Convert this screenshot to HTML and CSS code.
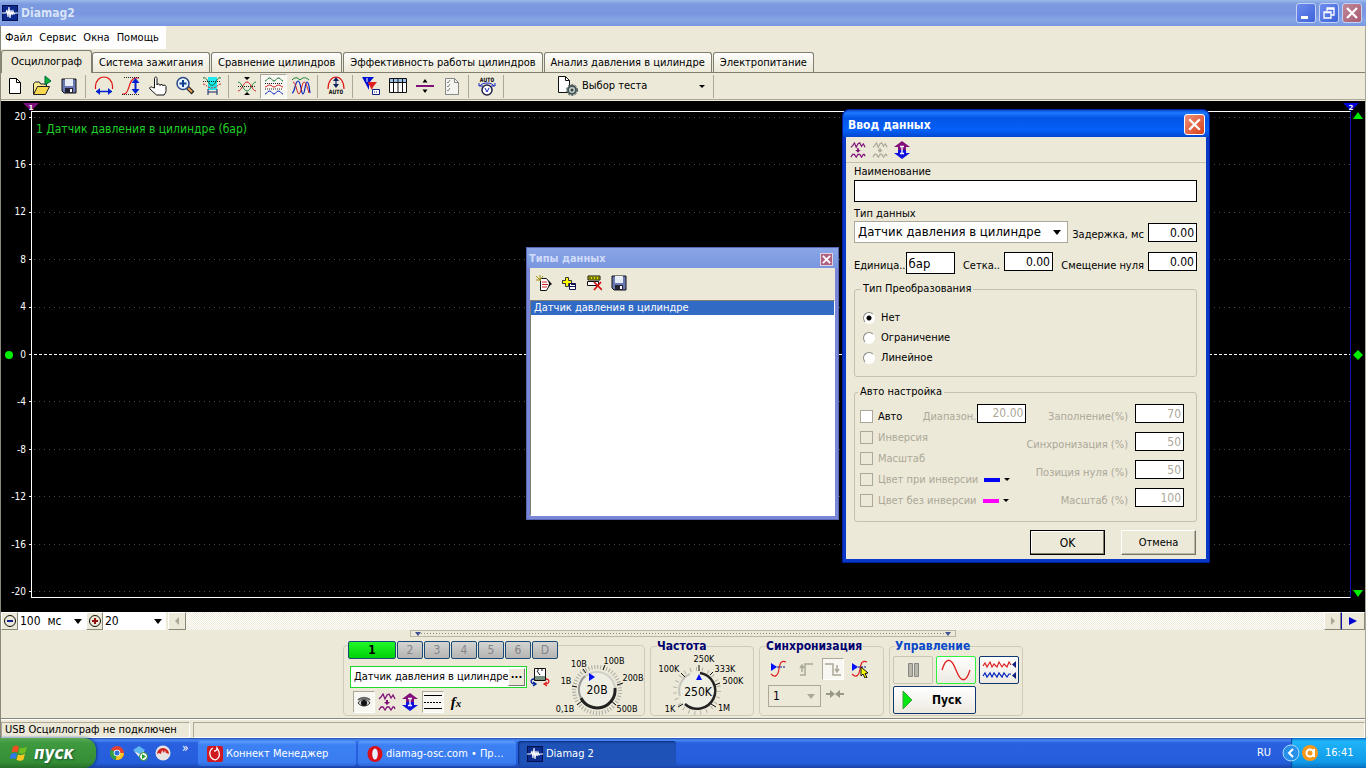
FILE: index.html
```
<!DOCTYPE html>
<html lang="ru">
<head>
<meta charset="utf-8">
<title>Diamag2</title>
<link rel="stylesheet" href="styles.css">
</head>
<body>
<svg class="defs" width="0" height="0" aria-hidden="true">
  <defs>
    <symbol id="app" viewBox="0 0 16 16"><rect width="16" height="16" fill="#0a2a8c"/><rect x=".5" y=".5" width="15" height="15" fill="none" stroke="#001050"/><path d="M0 8h4l1-3 1 7 1-10 1 11 1-8 1 5 1-4 1 3 1-1h3" fill="none" stroke="#fff" stroke-width="1.1"/></symbol>
    <symbol id="wave-move" viewBox="0 0 18 18"><path d="M1 6l2-2 2-3 2 5 2-4 2-1 2 4 2-3 2 4M1 17l2-3h2l2 3 2-3h2l2 3 2-3h1l1 2" fill="none" stroke="currentColor" stroke-width="1.300"/><path d="M6 9h6l-3 3zM8 7h2v3H8z" fill="currentColor"/></symbol>
    <symbol id="updown" viewBox="0 0 16 18"><path d="M8 0l8 6h-4v3H4V6H0z" fill="#80107a"/><path d="M8 18l8-6h-4V9H4v3H0z" fill="#1010e0"/><path d="M6 5.500h4M8 5v8M6 12.500h4" stroke="#fff" stroke-width="1.300" fill="none"/></symbol>
    <symbol id="save" viewBox="0 0 16 16"><path d="M1 1h14v14H3l-2-2z" fill="#6a78b4" stroke="#111"/><path d="M4 1h8v7H4z" fill="#e8ecf4"/><path d="M4 10h8v5H4z" fill="#223"/><path d="M9 11h2v3H9z" fill="#fff"/></symbol>
    <symbol id="sync" viewBox="0 0 18 18"><path d="M1 14c4 4 7 2 8-5s3-9 7-7" fill="none" stroke="#e02020" stroke-width="1.2"/><path d="M1 7h15" stroke="#001090" stroke-dasharray="2 1"/><path d="M1 3l6 4-6 4z" fill="#0010ff"/></symbol>
  </defs>
</svg>

<header class="titlebar">
  <svg class="i16"><use href="#app"/></svg>
  <h1>Diamag2</h1>
  <div class="winbtns">
    <button class="wb" aria-label="Свернуть"><svg class="i18" viewBox="0 0 18 18"><path d="M4 12h7v3H4z" fill="#fff"/></svg></button>
    <button class="wb" aria-label="Восстановить"><svg class="i18" viewBox="0 0 18 18"><path d="M7 7V4h7v7h-3M6.500 5h8M4 8h7v6H4zM4 8.500h7" fill="none" stroke="#fff" stroke-width="1.300"/></svg></button>
    <button class="wb dim" aria-label="Закрыть"><svg class="i18" viewBox="0 0 18 18"><path d="M4 4l10 10M14 4L4 14" stroke="#fff" stroke-width="2.200"/></svg></button>
  </div>
</header>

<main class="app">
<nav class="menubar"><button>Файл</button><button>Сервис</button><button>Окна</button><button>Помощь</button></nav>

<div class="tabs" role="tablist">
  <button class="tab on" role="tab">Осциллограф</button><button class="tab" role="tab">Система зажигания</button><button class="tab" role="tab">Сравнение цилиндров</button><button class="tab" role="tab">Эффективность работы цилиндров</button><button class="tab" role="tab">Анализ давления в цилиндре</button><button class="tab" role="tab">Электропитание</button>
</div>

<div class="toolbar">
  <button class="tool" aria-label="Новый"><svg viewBox="0 0 20 20"><path d="M4.500 2.500h7l4 4v11h-11z" fill="#fff" stroke="#000"/><path d="M11.500 2.500v4h4" fill="none" stroke="#000"/></svg></button>
  <button class="tool" aria-label="Открыть"><svg viewBox="0 0 20 20"><path d="M1.500 18V7.500l2-1.500h4l1 2h6v3" fill="#f8e890" stroke="#222"/><path d="M1.500 18.500l4-8h12l-4 8z" fill="#f8d850" stroke="#222"/><path d="M13 0l6 5-6 4z" fill="#08b030" stroke="#064"/></svg></button>
  <button class="tool" aria-label="Сохранить"><svg viewBox="-2 -2 20 20"><use href="#save" width="16" height="16"/></svg></button>
  <span class="sep"></span>
  <button class="tool" aria-label="Период"><svg viewBox="0 0 20 20"><path d="M1.500 13V10c1-12 16-12 17 0v3" fill="none" stroke="#e01010" stroke-width="1.200"/><path d="M2 15.500h16" stroke="#0020d0" stroke-width="1.500"/><path d="M2 15.500l4-3.500v7zM18 15.500l-4-3.500v7z" fill="#0020d0"/></svg></button>
  <button class="tool" aria-label="Амплитуда"><svg viewBox="0 0 20 20"><path d="M1 18h2c6 0 4-16 12-16h3" fill="none" stroke="#e01010" stroke-width="1.200"/><path d="M3 1.500h15M1 18.500h18" stroke="#222" stroke-dasharray="1 1"/><path d="M14.500 4v12" stroke="#0020d0" stroke-width="2"/><path d="M14.500 2l4 5h-8zM14.500 18l4-5h-8z" fill="#0020d0"/></svg></button>
  <button class="tool" aria-label="Рука"><svg viewBox="0 0 20 20"><path d="M6.500 12V2.500c0-2 2.500-2 2.500 0V9c0-1.500 3-1.500 3 .5 0-1.500 3-1.500 3 .5 0-1.500 3-1 3 .5v4c0 2-1 3-2 4.500H8.500L2 13c-1-1.500 1-3 2.500-1.500z" fill="#fff" stroke="#111"/></svg></button>
  <button class="tool" aria-label="Масштаб"><svg viewBox="0 0 20 20"><path d="M12 11l6 6" stroke="#222" stroke-width="4"/><path d="M13 12l4 4" stroke="#e8a050" stroke-width="2"/><circle cx="8" cy="7.500" r="6" fill="#e8f4ff" stroke="#2a4a88" stroke-width="1.500"/><path d="M8 4v7M4.500 7.500h7" stroke="#104090" stroke-width="2"/></svg></button>
  <button class="tool" aria-label="Курсоры"><svg viewBox="0 0 20 20"><path d="M6 1h9v13H6z" fill="#20e8f0"/><path d="M1 2c3-1 4 2 6 5 1 3 5 3 6 0 2-3 3-6 6-5" fill="none" stroke="#107030"/><path d="M1 5.500h18" stroke="#222" stroke-dasharray="1 1"/><path d="M1 8c3 0 4 4 9 4s6-4 9-4" fill="none" stroke="#c03030" stroke-dasharray="2 1"/><path d="M6 13v6M15 13v6M6 16h9" stroke="#102060"/></svg></button>
  <span class="sep"></span>
  <button class="tool" aria-label="Наложить"><svg viewBox="0 0 20 20"><path d="M1 6c4 0 5 9 9 9s5-9 9-9" fill="none" stroke="#108030"/><path d="M1 15c4 0 5-9 9-9s5 9 9 9" fill="none" stroke="#d02020"/><path d="M1 10.500h18" stroke="#222" stroke-dasharray="1 1"/><path d="M7 1h6l-3 3zM7 19h6l-3-3z"/></svg></button>
  <button class="tool pressed" aria-label="Разделить"><svg viewBox="0 0 20 20"><g fill="none"><path d="M1 5c2 0 2-3 4.500-3S8 5 10 5s2-3 4.500-3S17 5 19 5" stroke="#107030"/><path d="M1 11c2 0 2-2 4.500-2S8 11 10 11s2-2 4.500-2S17 11 19 11" stroke="#d02020"/><path d="M1 18c2 0 2-3 4.500-3S8 18 10 18s2-3 4.500-3S17 18 19 18" stroke="#0020c0"/><path d="M1 7.500h18M1 13h18" stroke="#222" stroke-dasharray="1 1"/></g></svg></button>
  <button class="tool" aria-label="Каналы"><svg viewBox="0 0 20 20"><g fill="none"><path d="M1 4c3-3 5-3 8 0 3-3 6-3 9 0" stroke="#108030"/><path d="M1 17c3 0 3-12 6-12s3 13 5 13 2-12 4-12 2 5 3 11" stroke="#0020c0" stroke-width="1.200"/><path d="M2 6c3 0 4 12 6 12s3-12 5-12 3 5 5 11" stroke="#d02020"/></g></svg></button>
  <span class="sep"></span>
  <button class="tool" aria-label="Автомасштаб"><svg viewBox="0 0 20 20"><path d="M2 13C2-3 18-3 18 13" fill="none" stroke="#e01010" stroke-width="1.200"/><path d="M10 3v8" stroke="#102060" stroke-width="1.200"/><path d="M10 1l3 4H7zM10 12l3-4H7z" fill="#102060"/><text x="10" y="18" class="tiny">AUTO</text></svg></button>
  <span class="sep"></span>
  <button class="tool" aria-label="Маркеры"><svg viewBox="0 0 20 20"><path d="M1 1h12L8 7v7L1 1z" fill="#0010d0"/><path d="M8 6h8l-4 5-1 3-4-7z" fill="#e02020"/><path d="M6 2v4" stroke="#fff"/><path d="M11.500 13.500h7v5h-7z" fill="#fff" stroke="#102080"/><path d="M13 16h4" stroke="#102080" stroke-dasharray="1 1"/></svg></button>
  <button class="tool" aria-label="Таблица"><svg viewBox="0 0 20 20"><path d="M1.500 2.500h17v14h-17z" fill="#fff" stroke="#111"/><path d="M2 3h16v3H2z" fill="#9ac0e8"/><path d="M1 6.500h18M5.500 3v13M10 3v13M14.500 3v13" stroke="#111"/></svg></button>
  <button class="tool" aria-label="Линия"><svg viewBox="0 0 20 20"><path d="M1 10h18" stroke="#80107a" stroke-width="2"/><path d="M7.500 6.500L10 3l2.500 3.500zM7.500 13.500L10 17l2.500-3.500z"/></svg></button>
  <button class="tool" aria-label="Список"><svg viewBox="0 0 20 20"><path d="M3.500 2.500h9l4 4v12h-13z" fill="#f4f4f0" stroke="#888"/><path d="M5 6l1 1 2-3M5 10l1 1 2-3M5 14l1 1 2-3M12.500 2.500v4h4" fill="none" stroke="#888"/></svg></button>
  <span class="sep"></span>
  <button class="tool" aria-label="Авто"><svg viewBox="0 0 20 20"><text x="10" y="6" class="tiny">AUTO</text><circle cx="10" cy="14" r="5" fill="#fff" stroke="#224" stroke-width="1.500"/><path d="M8 12l2 4 2-4M3 10c2-4 12-4 14 0M2 7v3h4M18 7v3h-4" fill="none" stroke="#1020c0"/></svg></button>
  <span class="sep"></span>
  <button class="testpick"><svg class="i20" viewBox="0 0 20 20"><path d="M.5.500h7l4 4v12H.5z" fill="#fff" stroke="#111"/><path d="M7.500.500v4h4" fill="none" stroke="#111"/><circle cx="14" cy="14" r="4" fill="#c8d0cc" stroke="#455" stroke-width="2"/><circle cx="14" cy="14" r="5.500" fill="none" stroke="#455" stroke-dasharray="2 1.500"/><circle cx="14" cy="14" r="1.500" fill="#344"/></svg><span>Выбор теста</span><i class="arrow small"></i></button>
  <span class="sep"></span>
</div>

<section class="scope">
  <div class="yaxis"><span>20</span><span>16</span><span>12</span><span>8</span><span>4</span><span>0</span><span>-4</span><span>-8</span><span>-12</span><span>-16</span><span>-20</span></div>
  <div class="plot">
    <div class="grid"></div><div class="grid"></div><div class="grid"></div><div class="grid"></div><div class="grid"></div><div class="grid zero"></div><div class="grid"></div><div class="grid"></div><div class="grid"></div><div class="grid"></div><div class="grid"></div>
    <span class="trace">1 Датчик давления в цилиндре (бар)</span>
    <svg class="flag first" viewBox="0 0 16 8"><path d="M0 0h16L8 8z" fill="#801080"/><text x="8" y="7" class="num">1</text></svg>
    <svg class="flag second" viewBox="0 0 16 8"><path d="M0 0h16L8 8z" fill="#0000d8"/><text x="8" y="7" class="num">2</text></svg>
  </div>
  <div class="gutter">
    <svg class="i10" viewBox="0 0 10 10"><path d="M5 1l5 7H0z" fill="#0e0"/></svg>
    <svg class="i10" viewBox="0 0 10 10"><path d="M5 0l5 5-5 5-5-5z" fill="#0e0"/></svg>
    <svg class="i10" viewBox="0 0 10 10"><path d="M0 2h10L5 9z" fill="#0e0"/></svg>
  </div>
  <span class="ball"></span>
</section>

<div class="timebar">
  <button class="sq" aria-label="Уменьшить"><svg viewBox="0 0 14 14"><circle cx="7" cy="7" r="5.500" fill="none" stroke="#111"/><path d="M4 7h6" stroke="#102090" stroke-width="2"/></svg></button>
  <label class="pick"><select aria-label="Развертка"><option>100&nbsp; мс</option></select><i class="arrow"></i></label>
  <button class="sq" aria-label="Увеличить"><svg viewBox="0 0 14 14"><circle cx="7" cy="7" r="5.500" fill="none" stroke="#111"/><path d="M4 7h6M7 4v6" stroke="#901010" stroke-width="2"/></svg></button>
  <label class="pick narrow"><select aria-label="Масштаб"><option>20</option></select><i class="arrow"></i></label>
  <button class="sq left" aria-label="Назад"><svg viewBox="0 0 14 14"><path d="M9 3v8L5 7z" fill="#aaa898"/></svg></button>
  <div class="track"></div>
  <button class="sq" aria-label="Вперед"><svg viewBox="0 0 14 14"><path d="M5 3v8l4-4z" fill="#aaa898"/></svg></button>
  <button class="sq play" aria-label="В конец"><svg viewBox="0 0 14 14"><path d="M3 3v8l8-4z" fill="#0000d0"/></svg></button>
</div>

<div class="splitter"><i></i><b></b><i></i></div>

<section class="panel">
  <div class="group channel">
    <div class="chcol">
      <div class="chans"><button class="ch on">1</button><button class="ch">2</button><button class="ch">3</button><button class="ch">4</button><button class="ch">5</button><button class="ch">6</button><button class="ch">D</button></div>
      <div class="sensor"><div class="sensorbox"><input aria-label="Датчик" value="Датчик давления в цилиндре"><button aria-label="Выбрать">...</button></div>
        <svg class="i20" viewBox="0 0 20 20"><path d="M4.500 1.500h11v12h-11z" fill="#fff" stroke="#111"/><path d="M5 9h10v4H5z" fill="#789080"/><path d="M7 4l3 4M11 3h2M7 3h2" stroke="#111"/><path d="M4 12c-4 0-4 5 1 5M3 15l3 2-3 2" fill="none" stroke="#0020a0" stroke-width="1.300"/><path d="M16 12c4 0 4 5-1 5M17 15l-3 2 3 2" fill="none" stroke="#e02020" stroke-width="1.300"/></svg></div>
      <div class="chtools">
        <button class="t22 pressed" aria-label="Показать"><svg viewBox="0 0 18 18"><path d="M3 10c3-5 9-5 12 0-3 4-9 4-12 0z" fill="#ccc" stroke="#333"/><path d="M3 7c3-3 9-3 12 0" fill="none" stroke="#666" stroke-width="2"/><circle cx="9" cy="10" r="3" fill="#111"/></svg></button>
        <button class="t22 purple" aria-label="Сдвиг"><svg><use href="#wave-move"/></svg></button>
        <button class="t22" aria-label="Вертикаль"><svg><use href="#updown"/></svg></button>
        <button class="t22 pressed" aria-label="Линии"><svg viewBox="0 0 18 16"><path d="M0 1.500h18M0 14.500h18" stroke="#000"/><path d="M0 8.500h18" stroke="#000" stroke-dasharray="2 1"/></svg></button>
        <button class="t22 fx">f<small>x</small></button>
      </div>
    </div>
    <svg class="dial1" viewBox="0 0 92 64"><circle cx="39" cy="39" r="23" fill="none" stroke="#aaa9a0" stroke-width="4" stroke-dasharray="1 2"/><circle cx="39" cy="39" r="20" fill="#ece9d8"/><circle cx="39" cy="39" r="18" fill="#efeee4" stroke="#d0d0c8" stroke-width="2"/><path d="M57 37A18 18 0 0 1 23 47" fill="none" stroke="#222" stroke-width="3"/><path d="M27 25A18 18 0 0 0 23 47" fill="none" stroke="#999" stroke-width="2"/><path d="M31 22l6 4-6 4z" fill="#0010f0"/><path d="M14 35l5 1M25 18l3 4M47 14l-2 5M65 32l-6 2M58 54l-5-4M19 54l5-4" stroke="#111"/><g class="dtxt"><text x="39" y="43" class="mid">20В</text><text x="21" y="16">10В</text><text x="56" y="13">100В</text><text x="8" y="33">1В</text><text x="75" y="30">200В</text><text x="7" y="61">0,1В</text><text x="69" y="61">500В</text></g></svg>
  </div>
  <fieldset class="group freq"><legend>Частота</legend>
    <svg class="dial2" viewBox="0 0 96 66"><circle cx="42" cy="38" r="22" fill="none" stroke="#b4b3a8" stroke-width="4" stroke-dasharray="1 5"/><circle cx="42" cy="38" r="18" fill="#efeee2"/><path d="M45 20A18 18 0 1 1 30 51" fill="none" stroke="#222" stroke-width="2.500"/><path d="M25 43A18 18 0 0 1 35 21" fill="none" stroke="#c4c4bc" stroke-width="2"/><path d="M44 21l3 6h-6z" fill="#0010f0"/><path d="M44 12v6M26 20l4 4M58 19l-3 3M65 30l-5 2M23 54l5-3M61 54l-5-3" stroke="#111"/><g class="dtxt"><text x="43" y="43" class="mid">250K</text><text x="49" y="9">250K</text><text x="14" y="19">100K</text><text x="70" y="19">333K</text><text x="78" y="31">500K</text><text x="15" y="59">1K</text><text x="69" y="58">1M</text></g></svg>
  </fieldset>
  <fieldset class="group syncg"><legend>Синхронизация</legend>
    <div class="row syncrow">
      <button class="t22" aria-label="Синхронизация"><svg><use href="#sync"/></svg></button>
      <button class="t22" aria-label="Фронт"><svg viewBox="0 0 18 18"><path d="M3 15h5V4h8M5 12V6M3 8l2-3 2 3" fill="none" stroke="#aaa898" stroke-width="1.500"/></svg></button>
      <button class="t22 pressed" aria-label="Спад"><svg viewBox="0 0 18 18"><path d="M1 4h8v11h8M13 5v7M11 9l2 3 2-3" fill="none" stroke="#aaa898" stroke-width="1.500"/></svg></button>
      <button class="t22" aria-label="Ручная"><svg viewBox="0 0 18 18"><use href="#sync" width="18" height="18"/><path d="M10 7l7 6-3 .5 2 4-2 .5-2-4-2 2z" fill="#ff0" stroke="#111"/></svg></button>
    </div>
    <div class="row"><label class="syncsel"><select aria-label="Канал" disabled><option>1</option></select><i class="arrow gray"></i></label>
    <svg class="i18" viewBox="0 0 18 18"><path d="M0 8h4V5l5 4-5 4v-3H0zM18 8h-4V5L9 9l5 4v-3h4z" fill="#999888"/></svg></div>
  </fieldset>
  <fieldset class="group ctl"><legend>Управление</legend>
    <div class="row">
      <button class="wide-btn off" aria-label="Пауза"><svg class="i18" viewBox="0 0 18 18"><path d="M4.500 2.500h4v13h-4zM10.500 2.500h4v13h-4z" fill="#b8b6a8" stroke="#888"/></svg></button>
      <button class="wide-btn green" aria-label="Синус"><svg class="i30" viewBox="0 0 30 22"><path d="M1 11C5-2 10-2 15 11S25 24 29 11" fill="none" stroke="#e02020" stroke-width="1.300"/></svg></button>
      <button class="wide-btn" aria-label="Поток"><svg class="i34" viewBox="0 0 34 22"><path d="M1 7l2-3 2 4 3-5 2 5 2-3 3 3 2-5 3 5 2-3 3 3 2-5 2 3" fill="none" stroke="#e02020" stroke-width="1.200"/><path d="M1 17l2-3 2 4 3-4 2 4 2-4 3 4 2-4 3 4 2-4 3 4 2-3h2" fill="none" stroke="#0020c0" stroke-width="1.200"/><path d="M34 2v7l-4-3.500zM34 13v7l-4-3.500z" fill="#102080"/></svg></button>
    </div>
    <button class="start"><svg class="i20" viewBox="0 0 20 20"><path d="M4 1l9 9-9 9z" fill="#00e810" stroke="#40a040"/></svg><span>Пуск</span></button>
  </fieldset>
</section>

<footer class="status"><span class="cell">USB Осциллограф не подключен</span><span class="cell rest"></span></footer>
</main>

<div class="taskbar">
  <button class="startbtn"><svg class="i20" viewBox="0 0 20 20"><path d="M3 4c2-2 4-2 6 0L7.500 9.500c-2-1-4-1-6 0z" fill="#f05020"/><path d="M10 4.500c2 1 4 1 7-1L15.500 9c-2 2-4 2-7 1z" fill="#70c020"/><path d="M1 11c2-1.500 4-1.500 6 0L5.500 16c-2-1-4-1-6 0z" fill="#3078f0"/><path d="M8 11.500c2 1 4 1 7-1l-1.500 6c-2 1.500-4 1.500-7 .5z" fill="#f8c820"/></svg><span>пуск</span></button>
  <div class="quick">
    <svg class="i16" viewBox="0 0 16 16"><circle cx="8" cy="8" r="7" fill="#e84030"/><path d="M8 8L2 4.500A7 7 0 0 0 7 15z" fill="#30a048"/><path d="M8 8h7a7 7 0 0 1-8 7z" fill="#f8c820"/><circle cx="8" cy="8" r="3.300" fill="#fff"/><circle cx="8" cy="8" r="2.500" fill="#3070d8"/></svg>
    <svg class="i16" viewBox="0 0 16 16"><path d="M1 5l6-4 6 4-5 5z" fill="#60b8f0"/><path d="M2 6l5 6 5-3V6L8 9z" fill="#e8eef4"/><circle cx="11.500" cy="11.500" r="4" fill="#fff" stroke="#208028"/><path d="M10 9l4 2.500L10 14z" fill="#18a028"/></svg>
    <svg class="i16" viewBox="0 0 16 16"><circle cx="8" cy="8" r="7.500" fill="#e8e4e4"/><path d="M2 9a6 6 0 0 1 12 0l-3-1-1-3-1 3-2-3-1 4-2-1z" fill="#d02020"/></svg>
    <span class="more">»</span>
  </div>
  <button class="task"><svg class="i16" viewBox="0 0 16 16"><rect width="16" height="16" rx="2" fill="#d01820"/><path d="M6 2c-5 3-4 10 2 12 6-2 5-8 2-12 0 2-1 3-3 3" fill="none" stroke="#fff" stroke-width="1.300"/></svg><span>Коннект Менеджер</span></button>
  <button class="task"><svg class="i16" viewBox="0 0 16 16"><ellipse cx="8" cy="8" rx="7.500" ry="8" fill="#d81018"/><ellipse cx="8" cy="8" rx="2.800" ry="5.500" fill="#e8f0ff"/></svg><span>diamag-osc.com • Пр…</span></button>
  <button class="task cur"><svg class="i16"><use href="#app"/></svg><span>Diamag 2</span></button>
  <span class="lang">RU</span>
  <div class="tray"><svg class="i18 knob" viewBox="0 0 18 18"><circle cx="9" cy="9" r="8" fill="#2890e8" stroke="#a8d8ff"/><path d="M11 5L7 9l4 4" fill="none" stroke="#fff" stroke-width="2"/></svg><svg class="i16" viewBox="0 0 16 16"><circle cx="8" cy="8" r="8" fill="#f89818"/><circle cx="8" cy="8" r="3.500" fill="none" stroke="#fff" stroke-width="2"/><path d="M12 4v8" stroke="#fff" stroke-width="2"/></svg><time>16:41</time></div>
</div>

<section class="window types">
  <div class="wtitle"><h2>Типы данных</h2><button class="close13" aria-label="Закрыть"><svg viewBox="0 0 12 12"><path d="M2 2l8 8M10 2l-8 8" stroke="#fff" stroke-width="2"/></svg></button></div>
  <div class="wbody">
    <div class="wtools">
      <button class="t25" aria-label="Создать"><svg viewBox="0 0 16 16"><path d="M4.500 3.500h6l4 5-4 7h-6z" fill="#fff" stroke="#111"/><path d="M6 7h5M6 9.500h6M6 12h5" stroke="#d02020"/><path d="M0 1l5 5M4 0v5M0 5h4M7 1L4 5" stroke="#a09010"/><path d="M12 5l4 4-4 3 1-3z" fill="#111"/></svg></button>
      <button class="t25" aria-label="Добавить"><svg viewBox="0 0 16 16"><path d="M4.500 2.500h3v3h3v3h-3v3h-3v-3h-3v-3h3z" fill="#ff0" stroke="#333"/><path d="M8.500 8.500h6v6h-6z" fill="#fff" stroke="#115"/><path d="M9 11.500h5M10 9.500h4" stroke="#115"/></svg></button>
      <button class="t25" aria-label="Удалить"><svg viewBox="0 0 16 16"><path d="M2 1h12v4H2z" fill="#dd0" stroke="#111"/><path d="M3 3h10" stroke="#111" stroke-dasharray="2 1"/><path d="M1.500 6.500h11v4h-11z" fill="#fff" stroke="#111"/><path d="M8 7l8 8M15 7l-7 8" stroke="#d01010" stroke-width="1.700"/></svg></button>
      <button class="t25" aria-label="Сохранить"><svg><use href="#save"/></svg></button>
    </div>
    <ul class="list"><li>Датчик давления в цилиндре</li></ul>
  </div>
</section>

<section class="window entry">
  <div class="wtitle"><h2>Ввод данных</h2><button class="close20" aria-label="Закрыть"><svg viewBox="0 0 18 18"><path d="M4 4l10 10M14 4L4 14" stroke="#fff" stroke-width="2.200"/></svg></button></div>
  <form class="wbody">
    <div class="etools"><button type="button" class="t22 purple" aria-label="Сдвиг"><svg><use href="#wave-move"/></svg></button><button type="button" class="t22 faded" aria-label="Сброс"><svg><use href="#wave-move"/></svg></button><button type="button" class="t22" aria-label="Вертикаль"><svg><use href="#updown"/></svg></button></div>
    <div class="fields">
      <label for="name">Наименование</label>
      <input id="name" class="wide">
      <label for="kind">Тип данных</label>
      <div class="line">
        <div class="kind"><select id="kind"><option>Датчик давления в цилиндре</option></select><i class="arrow"></i></div>
        <label for="delay" class="end">Задержка, мс</label><input id="delay" class="n" value="0.00">
      </div>
      <div class="line three">
        <label for="unit">Единица..</label><input id="unit" class="n tall" value="бар" autofocus>
        <label for="mesh" class="end">Сетка..</label><input id="mesh" class="n" value="0.00">
        <label for="shift" class="end">Смещение нуля</label><input id="shift" class="n" value="0.00">
      </div>
      <fieldset class="conv"><legend>Тип Преобразования</legend>
        <label><input type="radio" name="c" checked>Нет</label>
        <label><input type="radio" name="c">Ограничение</label>
        <label><input type="radio" name="c">Линейное</label>
      </fieldset>
      <fieldset class="auto"><legend>Авто настройка</legend>
        <div class="checks">
          <div class="line"><label class="live"><input type="checkbox">Авто</label><label for="range" class="end">Диапазон.</label><input id="range" class="n" value="20.00" disabled></div>
          <label><input type="checkbox" disabled>Инверсия</label>
          <label><input type="checkbox" disabled>Масштаб</label>
          <div class="line"><label><input type="checkbox" disabled>Цвет при инверсии</label><button type="button" class="swatch" aria-label="Цвет"><b></b><i class="arrow small"></i></button></div>
          <div class="line"><label><input type="checkbox" disabled>Цвет без инверсии</label><button type="button" class="swatch pink" aria-label="Цвет"><b></b><i class="arrow small"></i></button></div>
        </div>
        <div class="nums">
          <label for="n1">Заполнение(%)</label><input id="n1" class="n" value="70" disabled>
          <label for="n2">Синхронизация (%)</label><input id="n2" class="n" value="50" disabled>
          <label for="n3">Позиция нуля (%)</label><input id="n3" class="n" value="50" disabled>
          <label for="n4">Масштаб (%)</label><input id="n4" class="n" value="100" disabled>
        </div>
      </fieldset>
      <div class="actions"><button type="button" class="ok">OK</button><button type="button">Отмена</button></div>
    </div>
  </form>
</section>
</body>
</html>
```
FILE: styles.css
```
* { box-sizing: border-box; }
body {
  margin: 0; min-height: 100vh; display: flex; flex-direction: column; position: relative; overflow: hidden;
  background: #ece9d8; color: #000;
  font-family: "DejaVu Sans Condensed", "DejaVu Sans", sans-serif; font-size: 11px; line-height: 14px;
}
button, input, select { font: inherit; color: inherit; margin: 0; padding: 0; border: 0; background: none; border-radius: 0; }
h1, h2 { margin: 0; }
svg { display: block; flex: none; }
.defs { position: absolute; }
.i10 { width: 10px; height: 10px; }
.i16 { width: 16px; height: 16px; }
.i18 { width: 18px; height: 18px; }
.i20 { width: 20px; height: 20px; }
.i30 { width: 30px; height: 22px; }
.i34 { width: 34px; height: 22px; }
.arrow { width: 0; height: 0; border: 4px solid transparent; border-top: 5px solid #000; border-bottom: 0; }
.arrow.small { border-width: 3px; border-bottom: 0; }
.arrow.gray { border-top-color: #aca899; }

.titlebar { display: flex; align-items: center; gap: 3px; height: 26px; padding: 0 4px 0 2px; background: linear-gradient(#9db9eb 0, #7b9be0 4px, #7a96df 14px, #86a6e6 20px, #7a96df 26px); }
.titlebar h1 { font: bold 12px/18px "DejaVu Sans Condensed", sans-serif; color: #d8e4f8; flex: 1; }
.winbtns { display: flex; gap: 3px; }
.wb { width: 20px; height: 20px; border: 1px solid #c4d2f4; border-radius: 3px; background: linear-gradient(135deg, #6f8df0, #3c62d8); }
.wb.dim { background: linear-gradient(135deg, #c08898, #a85a70); }

.app { flex: 1; display: flex; flex-direction: column; border-left: 1px solid #8a8878; border-right: 1px solid #aaa898; }
.menubar { display: flex; align-self: flex-start; gap: 7px; height: 23px; padding: 0 7px 0 4px; background: #fff; }
.tabs { display: flex; align-items: flex-end; height: 24px; gap: 1px; border-bottom: 1px solid #807e70; }
.tab { height: 20px; padding: 0 6px; border: 1px solid #807e70; border-bottom: 0; border-radius: 3px 3px 0 0; background: linear-gradient(#fdfdfb, #ece9d8); }
.tab.on { height: 23px; width: 91px; margin-right: -1px; margin-bottom: -1px; background: #ece9d8; }

.toolbar { display: flex; align-items: center; height: 27px; border-bottom: 1px solid #aca899; }
.tool { width: 27px; height: 25px; display: grid; place-items: center; }
.tool svg { width: 20px; height: 20px; overflow: visible; }
.pressed { background: #f8f7f2; border: 1px solid #aca899; border-right-color: #fff; border-bottom-color: #fff; }
.sep { width: 8px; height: 23px; background: linear-gradient(#aca899, #aca899) 3px 0 / 1px 100% no-repeat; }
.tiny { font: bold 6px "DejaVu Sans Mono", monospace; text-anchor: middle; }
.testpick { display: flex; align-items: center; gap: 4px; width: 202px; padding-left: 50px; text-align: left; }
.testpick .arrow { margin-left: auto; margin-right: 5px; }
.testpick span { font-size: 11px; line-height: 14px; }

.scope { flex: 1; display: flex; position: relative; padding: 10px 0 14px; margin-top: 1px; background: #000; color: #fff; }
.yaxis { width: 30px; display: flex; flex-direction: column; justify-content: space-between; text-align: right; padding-right: 5px; font-size: 10px; line-height: 12px; }
.plot { flex: 1; position: relative; display: flex; flex-direction: column; justify-content: space-between; padding: 5px 0; border: 1px solid #fff; border-right-color: #1010b0; }
.grid { height: 1px; margin-left: -3px; background: linear-gradient(90deg, #fff 3px, transparent 3px), repeating-linear-gradient(90deg, #484848 0, #484848 1px, #000 1px, #000 5px); }
.grid.zero { background: repeating-linear-gradient(90deg, #fff 0, #fff 3px, #000 3px, #000 5px); }
.trace { position: absolute; left: 4px; top: 9px; color: #20d028; font-size: 12px; line-height: 16px; }
.flag { position: absolute; top: -9px; width: 16px; height: 8px; }
.first { left: -9px; }
.second { right: -9px; }
.num { font: bold 7px "DejaVu Sans", sans-serif; fill: #fff; text-anchor: middle; }
.gutter { width: 14px; display: flex; flex-direction: column; justify-content: space-between; align-items: center; }
.ball { position: absolute; left: 4px; top: 50%; width: 8px; height: 8px; margin-top: -6px; border-radius: 50%; background: #0e0; }

.timebar { display: flex; height: 18px; }
.sq { width: 17px; height: 18px; display: grid; place-items: center; border: 1px solid; border-color: #fff #8a8878 #8a8878 #fff; background: #ece9d8; }
.sq svg { width: 14px; height: 14px; }
.sq.left { margin-left: 2px; width: 18px; }
.sq.play { width: 24px; border-left-color: #1010b0; }
.pick { position: relative; width: 68px; background: #fff; display: flex; align-items: center; }
.pick.narrow { width: 63px; }
select { appearance: none; width: 100%; outline: 0; }
.pick select { padding-left: 2px; font-size: 12px; }
.pick .arrow { position: absolute; right: 4px; }
.track { flex: 1; background: repeating-conic-gradient(#fff 0 25%, #ece9d8 0 50%) 0 0 / 2px 2px; }

.splitter { align-self: center; display: flex; align-items: center; width: 546px; height: 7px; padding: 0 4px; border: 1px solid #bab7a6; }
.splitter i { border: 3px solid transparent; border-top: 4px solid #405090; border-bottom: 0; }
.splitter b { flex: 1; height: 1px; background: repeating-linear-gradient(90deg, #888 0, #888 1px, transparent 1px, transparent 3px); }

.panel { display: flex; justify-content: center; align-items: flex-end; gap: 5px; height: 82px; padding: 3px 0 2px; border-bottom: 1px solid #8a8878; }
.group { margin: 0; padding: 0 4px; min-width: 0; height: 77px; border: 1px solid #d0ccba; border-radius: 4px; }
.group legend { margin-left: 2px; padding: 0; color: #000070; font-weight: bold; font-size: 12px; line-height: 14px; }
.row { display: flex; }
.channel { display: flex; width: 302px; height: 71px; }
.chcol { flex: none; width: 210px; margin-top: -5px; }
.chans { display: flex; gap: 1px; }
.ch { flex: none; width: 26px; height: 18px; border: 1px solid #1c4a78; border-radius: 2px; background: linear-gradient(#d4d4d2, #b4b4b2); color: #85858a; font-size: 12px; }
.ch.on { width: 48px; background: linear-gradient(#20f828, #00d008); color: #000; font-weight: bold; }
.sensor { display: flex; gap: 3px; align-items: center; margin: 7px 0 3px 2px; }
.sensorbox { display: flex; width: 177px; height: 22px; border: 1px solid #20d828; background: #fff; padding: 1px; }
.sensorbox input { flex: 1; min-width: 0; padding-left: 2px; }
.sensorbox button { width: 17px; border: 1px solid; border-color: #fff #777 #777 #fff; background: #ece9d8; font-weight: bold; line-height: 8px; padding-bottom: 4px; }
.chtools { display: flex; gap: 1px; margin-left: 5px; }
.t22 { width: 22px; height: 22px; display: grid; place-items: center; }
.t22 svg { width: 18px; height: 18px; }
.purple { color: #80107a; }
.faded { color: #aca899; }
.fx { font: italic bold 15px "Liberation Serif", serif; display: block; }
.fx small { font-size: 11px; }
.dial1 { width: 92px; height: 64px; margin-top: 5px; overflow: visible; }
.dtxt text { font: 9px "DejaVu Sans Condensed", sans-serif; text-anchor: middle; }
.dtxt text.mid { font-size: 12px; }
.freq { width: 104px; }
.dial2 { width: 96px; height: 66px; overflow: visible; }
.syncg { width: 125px; padding-left: 8px; }
.syncg legend { margin-left: -2px; }
.syncrow { gap: 5px; margin: 5px 0; }
.syncsel { position: relative; width: 53px; height: 22px; border: 1px solid #aca899; margin-right: 5px; display: flex; align-items: center; }
.syncsel select { padding-left: 4px; font-size: 12px; opacity: 1; color: #000; }
.syncsel .arrow { position: absolute; right: 5px; }
.ctl { width: 134px; padding: 0 3px; }
.ctl legend { color: #0848c8; }
.ctl .row { gap: 3px; margin: 3px 0 2px; }
.wide-btn, .start { display: grid; place-items: center; width: 40px; height: 28px; border: 1px solid #103870; border-radius: 2px; background: linear-gradient(#fff, #ece9e0); }
.wide-btn.off { background: #ece9d8; border-color: #c8c5b4; }
.wide-btn.green { border: 1px solid #30f040; }
.start { display: flex; align-items: center; width: 83px; padding-left: 5px; gap: 13px; font-weight: bold; font-size: 12px; }

.status { display: flex; gap: 3px; height: 19px; padding-top: 2px; border-top: 1px solid #fff; }
.cell { width: 189px; padding-left: 3px; border: 1px solid; border-color: #aca899 #fff #fff #aca899; line-height: 14px; white-space: nowrap; }
.rest { flex: 1; }

.taskbar { display: flex; height: 30px; background: linear-gradient(#1f48a8 0, #4a8cf5 2px, #2a60e0 5px, #245edb 25px, #1941a5 30px); color: #fff; }
.startbtn { display: flex; align-items: center; gap: 4px; width: 96px; padding-left: 10px; border-radius: 0 12px 12px 0; background: linear-gradient(#5aa858 0, #3f9a3f 5px, #358e35 24px, #256f28 30px); box-shadow: 1px 0 3px #123a80; font: italic bold 17px/24px "DejaVu Sans Condensed", sans-serif; text-shadow: 1px 1px 2px #153; }
.quick { display: flex; align-items: center; gap: 7px; width: 102px; padding-left: 13px; }
.more { align-self: flex-start; margin: 3px 0 0 4px; font-size: 12px; }
.task { display: flex; align-items: center; gap: 3px; width: 158px; height: 25px; margin: 3px 2px 0 0; padding-left: 9px; border-radius: 3px; background: linear-gradient(#5c9cfc 0, #3c81f3 4px, #3a7cf0 21px, #2c66d8 25px); }
.task.cur { background: #1e52b7; box-shadow: inset 1px 1px 2px #0c2c78; }
.lang { margin-left: auto; padding-right: 20px; line-height: 30px; }
.tray { display: flex; align-items: center; gap: 2px; width: 75px; background: linear-gradient(#0c70c8 0, #20b4f8 3px, #109ae8 24px, #0a70c0 30px); box-shadow: inset 1px 0 1px #084a98; }
.knob { margin-left: -9px; }
.tray time { margin-left: 5px; }

.window { position: absolute; display: flex; flex-direction: column; }
.wtitle { display: flex; align-items: center; justify-content: space-between; }
.types { left: 526px; top: 247px; width: 313px; height: 273px; padding: 0 3px 3px; background: #7a86d8; border: 1px solid #5a68b8; }
.types .wtitle { height: 20px; margin: 0 -3px; padding: 2px 5px 0 2px; background: linear-gradient(#8aa6e8, #7a96df); }
.types h2 { font-size: 11px; color: #d0dcf8; }
.close13 { width: 13px; height: 13px; border: 1px solid #e0d0e0; background: #b06080; }
.close13 svg { width: 11px; height: 11px; }
.types .wbody { flex: 1; display: flex; flex-direction: column; background: #ece9d8; }
.wtools { display: flex; height: 32px; padding: 2px 1px 0; }
.t25 { width: 25px; height: 25px; display: grid; place-items: center; }
.t25 svg { width: 16px; height: 16px; }
.list { flex: 1; list-style: none; margin: 0; padding: 0; border: 1px solid #807e70; border-color: #807e70 #fff #fff #807e70; background: #fff; }
.list li { padding-left: 3px; background: #316ac5; color: #fff; }

.entry { left: 842px; top: 109px; width: 368px; padding: 0 3px 3px; border-radius: 7px 7px 0 0; background: #0838c8; border: 1px solid #0020a0; }
.entry .wtitle { height: 27px; margin: 0 -3px; padding: 2px 4px 0 5px; border-radius: 7px 7px 0 0; background: linear-gradient(#0a50d0 0, #1c78ff 3px, #0455e4 8px, #0460f8 20px, #0348d0 27px); color: #fff; }
.entry h2 { font-size: 12px; }
.close20 { width: 21px; height: 21px; border: 1px solid #fff; border-radius: 3px; background: linear-gradient(135deg, #f09078, #d84018); }
.close20 svg { width: 19px; height: 19px; }
.entry .wbody { background: #ece9d8; }
.etools { display: flex; height: 26px; padding: 2px 1px; border-bottom: 1px solid #c4c1b0; }
.etools svg { width: 16px; height: 18px; }
.fields { display: flex; flex-direction: column; padding: 2px 9px 4px 8px; }
.fields input:not([type]) { border: 1px solid #000; background: #fff; outline: 0; }
.fields .wide { height: 22px; margin: 1px 0 5px; }
.line { display: flex; align-items: flex-start; }
.line .end { margin-left: auto; }
.n { width: 49px; height: 19px; padding-right: 2px; text-align: right; font-size: 12px; margin-left: 4px; }
.n.tall { height: 22px; padding-left: 2px; margin-left: 0; text-align: left; font-size: 13px; }
.n:disabled { color: #aca899; }
.kind { position: relative; display: flex; align-items: center; width: 214px; height: 22px; border: 1px solid #aca899; background: #fff; font-size: 13px; }
.kind select { padding-left: 3px; }
.kind .arrow { position: absolute; right: 6px; }
.line > label { padding-top: 7px; }
.line .n { margin-top: 2px; }
.three { margin-top: 9px; }
.three .n { margin-top: 0; }
.fields fieldset { margin: 0; padding: 0; min-width: 0; border: 1px solid #c4c1b0; border-radius: 3px; }
.fields legend { margin-left: -2px; padding: 0 2px; line-height: 14px; }
.fields .conv { margin-top: 8px; height: 95px; padding: 12px 8px 0; }
.conv label { display: flex; align-items: center; gap: 6px; height: 20px; }
input[type=radio] { appearance: none; width: 12px; height: 12px; border: 1px solid #888; border-right-color: #fff; border-bottom-color: #fff; border-radius: 50%; background: #fff; }
input[type=radio]:checked { background: radial-gradient(#000 0 2px, #fff 3px); }
.fields .auto { display: flex; justify-content: space-between; margin-top: 8px; height: 137px; padding: 5px 12px 0 5px; color: #aca899; }
.auto legend { color: #000; }
.checks { width: 172px; margin-top: 2px; display: flex; flex-direction: column; }
.checks label { display: flex; align-items: center; gap: 5px; height: 21px; padding: 0; white-space: nowrap; }
.checks .line { height: 21px; align-items: center; }
.checks .line .n { margin: -7px 0 0 1px; }
.live { color: #000; }
input[type=checkbox] { appearance: none; width: 13px; height: 13px; border: 1px solid #aca899; background: #ece9d8; }
.live input { background: #fff; }
.swatch { display: flex; align-items: center; gap: 4px; margin-left: 6px; }
.swatch b { width: 16px; height: 4px; background: #0000f0; }
.pink b { background: #f0f; }
.nums { display: grid; grid-template-columns: auto 49px; column-gap: 7px; row-gap: 9px; align-content: start; text-align: right; white-space: nowrap; }
.nums label { padding-top: 6px; height: 19px; }
.nums .n { margin: 0; }
.actions { display: flex; justify-content: flex-end; gap: 16px; margin-top: 8px; padding-right: 1px; }
.actions button { width: 75px; height: 25px; border: 1px solid; border-color: #fff #777568 #777568 #fff; box-shadow: inset -1px -1px #bab7a6; background: #ece9d8; }
.actions .ok { border-color: #000; box-shadow: inset -1px -1px #807e70, inset 1px 1px #fff; font-size: 12px; }
```
